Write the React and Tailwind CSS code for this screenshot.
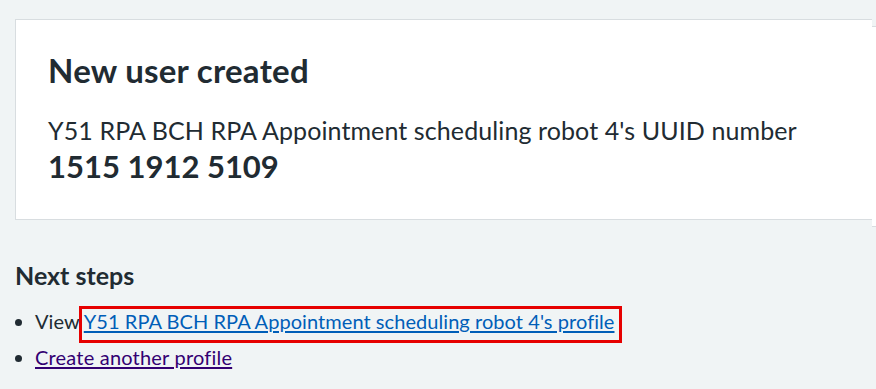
export default function App() {
  return (
    <div className="h-[389px] w-[876px] overflow-hidden bg-[#f0f4f5] text-[#212b32] font-['Lato',sans-serif]">
      {/* Confirmation panel */}
      <div className="flex h-[220px] items-start pt-[19px] pl-[15px]">
        <div className="w-[857px] shrink-0 border border-r-0 border-[#d8dde0] bg-white pl-[32px] pt-[30px] pb-[35px]">
          <h2 className="text-[33px] leading-[40px] font-bold tracking-[0.25px]">New user created</h2>
          <p className="mt-[24px] text-[25px] leading-[32px] tracking-[0.1px]">Y51 RPA BCH RPA Appointment scheduling robot 4's UUID number</p>
          <p className="mt-[2px] text-[31px] leading-[36px] font-bold">1515 1912 5109</p>
        </div>
        <div className="mt-[7px] h-[201px] w-[20px] shrink-0 border-y border-[#d8dde0] bg-white"></div>
      </div>

      {/* Next steps */}
      <div className="pl-[15px]">
        <h3 className="mt-[41px] text-[25px] leading-[28px] font-bold">Next steps</h3>
        <ul className="mt-[18px] list-disc pl-[20px] text-[20px] leading-[28px] tracking-[0.06px]">
          <li className="mb-[8px]">
            View{' '}
            <a href="#" className="relative text-[#005eb8] underline underline-offset-[2px]">
              Y51 RPA BCH RPA Appointment scheduling robot 4's profile
              <span className="absolute -left-[5px] -right-[8px] -top-[3px] -bottom-[10px] border-[3px] border-[#e60000]"></span>
            </a>
          </li>
          <li>
            <a href="#" className="text-[#330072] underline underline-offset-[2px] tracking-[0.2px]">Create another profile</a>
          </li>
        </ul>
      </div>
    </div>
  );
}
